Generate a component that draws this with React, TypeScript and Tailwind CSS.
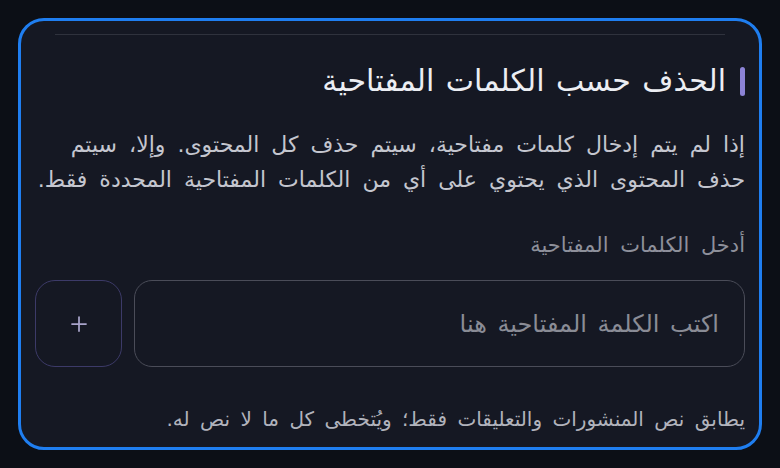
import { Plus } from "lucide-react";

const font = { fontFamily: '"DejaVu Sans", sans-serif' };

export default function App() {
  return (
    <div className="w-[780px] h-[468px] bg-[#0c0f16] p-[18px]" style={font}>
      <div
        dir="rtl"
        className="h-[432px] rounded-[26px] border-[3px] border-[#1f7ef0] bg-[#151823] px-[14px] overflow-hidden"
      >
        {/* faint divider from the section above */}
        <div className="mx-[20px] mt-[13px] h-px bg-[#2f323d]" />

        {/* heading */}
        <div className="mt-[28px] flex items-center gap-[14px]">
          <div className="h-[29px] w-[5px] rounded-full bg-[#8c83d6]" />
          <h2 className="text-[30px] leading-[36px] [word-spacing:2px] text-[#eceef3]">
            الحذف حسب الكلمات المفتاحية
          </h2>
        </div>

        {/* description */}
        <p className="mt-[28px] text-[22px] leading-[35px] [word-spacing:5px] text-[#c4c6cf]">
          <span className="block whitespace-nowrap">
            إذا لم يتم إدخال كلمات مفتاحية، سيتم حذف كل المحتوى. وإلا، سيتم
          </span>
          <span className="block whitespace-nowrap">
            حذف المحتوى الذي يحتوي على أي من الكلمات المفتاحية المحددة فقط.
          </span>
        </p>

        {/* label */}
        <div className="mt-[34px] text-[21px] leading-[28px] [word-spacing:5px] text-[#8e909b]">
          أدخل الكلمات المفتاحية
        </div>

        {/* input row */}
        <div className="mt-[21px] flex gap-[12px]">
          <div className="flex h-[87px] flex-1 items-center rounded-[18px] border border-[#4a4c58] px-[25px] text-[24px] [word-spacing:3px] text-[#8a8c96]">
            اكتب الكلمة المفتاحية هنا
          </div>
          <button className="flex h-[87px] w-[87px] shrink-0 items-center justify-center rounded-[20px] border border-[#3c3a68] text-[#a9a4cb]">
            <Plus size={24} strokeWidth={1.75} />
          </button>
        </div>

        {/* footnote */}
        <p className="mt-[37px] text-[20px] leading-[30px] [word-spacing:4px] text-[#b1b3bc]">
          يطابق نص المنشورات والتعليقات فقط؛ ويُتخطى كل ما لا نص له.
        </p>
      </div>
    </div>
  );
}
